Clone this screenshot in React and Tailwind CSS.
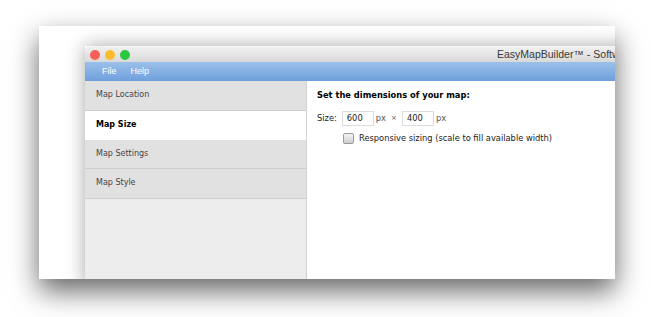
import React from "react";

const items = [
    { label: "Map Location", active: false },
    { label: "Map Size", active: true },
    { label: "Map Settings", active: false },
    { label: "Map Style", active: false },
];

const App = () => {
    return (
        <div className="w-[651px] h-[317px] bg-white pl-[39px] pt-[26px] overflow-hidden">
            {/* Card around the window */}
            <div className="w-[576px] h-[253px] bg-white overflow-hidden pl-[46px] pt-[20px] shadow-[0_12px_26px_rgba(0,0,0,0.6)]">
                <div className="w-[620px] h-[240px] flex flex-col shadow-[0_0_18px_rgba(0,0,0,0.35)] font-['DejaVu_Sans',sans-serif]">
                    {/* Title bar */}
                    <div className="h-[16px] flex items-center pl-[5px] bg-gradient-to-b from-[#f0f0f0] to-[#d9d9d9] rounded-t-[4px] border-t border-[#f7f7f7]">
                        <div className="flex gap-[5px]">
                            <span className="w-[10px] h-[10px] rounded-full bg-[#fc5f57]" />
                            <span className="w-[10px] h-[10px] rounded-full bg-[#fdbc2e]" />
                            <span className="w-[10px] h-[10px] rounded-full bg-[#29c840]" />
                        </div>
                        <span className="ml-[367px] whitespace-nowrap text-[10.5px] text-[#3a3a3a] font-['Liberation_Sans',sans-serif]">
                            EasyMapBuilder™ - Software
                        </span>
                    </div>

                    {/* Menu bar */}
                    <div className="h-[19px] flex items-center pl-[17px] gap-[14px] bg-gradient-to-b from-[#9cc0ea] to-[#6f9fdc] text-[9px] text-white font-['Liberation_Sans',sans-serif]">
                        <span>File</span>
                        <span>Help</span>
                    </div>

                    {/* Body */}
                    <div className="flex flex-1">
                        <div className="w-[222px] bg-[#ededed] border-r border-[#d2d2d2]">
                            {items.map((item) => (
                                <div
                                    key={item.label}
                                    className={
                                        item.active
                                            ? "h-[29px] flex items-center pl-[11px] bg-white text-[8px] font-bold text-black"
                                            : "h-[29.5px] flex items-center pl-[11px] bg-[#e1e1e1] border-b border-[#cdcdcd] text-[8px] text-[#444]"
                                    }
                                >
                                    {item.label}
                                </div>
                            ))}
                        </div>

                        <div className="flex-1 bg-white pl-[10px] pt-[8px] text-[8.3px] text-[#222]">
                            <div className="font-bold text-black h-[12px] flex items-center">Set the dimensions of your map:</div>
                            <div className="flex items-center mt-[10px] h-[15px]">
                                <span>Size:</span>
                                <span className="ml-[5px] w-[32px] h-[15px] border border-[#dcdcdc] flex items-center pl-[4px]">600</span>
                                <span className="ml-[2px] text-[#555]">px</span>
                                <span className="ml-[5px] text-[#555] text-[7px]">×</span>
                                <span className="ml-[5px] w-[32px] h-[15px] border border-[#dcdcdc] flex items-center pl-[4px]">400</span>
                                <span className="ml-[2px] text-[#555]">px</span>
                            </div>
                            <div className="flex items-center mt-[6px] pl-[26px]">
                                <span className="w-[11px] h-[11px] border border-[#9a9a9a] rounded-[2px] bg-gradient-to-b from-[#f4f4f4] to-[#cfcfcf]" />
                                <span className="ml-[5px]">Responsive sizing (scale to fill available width)</span>
                            </div>
                        </div>
                    </div>
                </div>
            </div>
        </div>
    );
};

export default App;
